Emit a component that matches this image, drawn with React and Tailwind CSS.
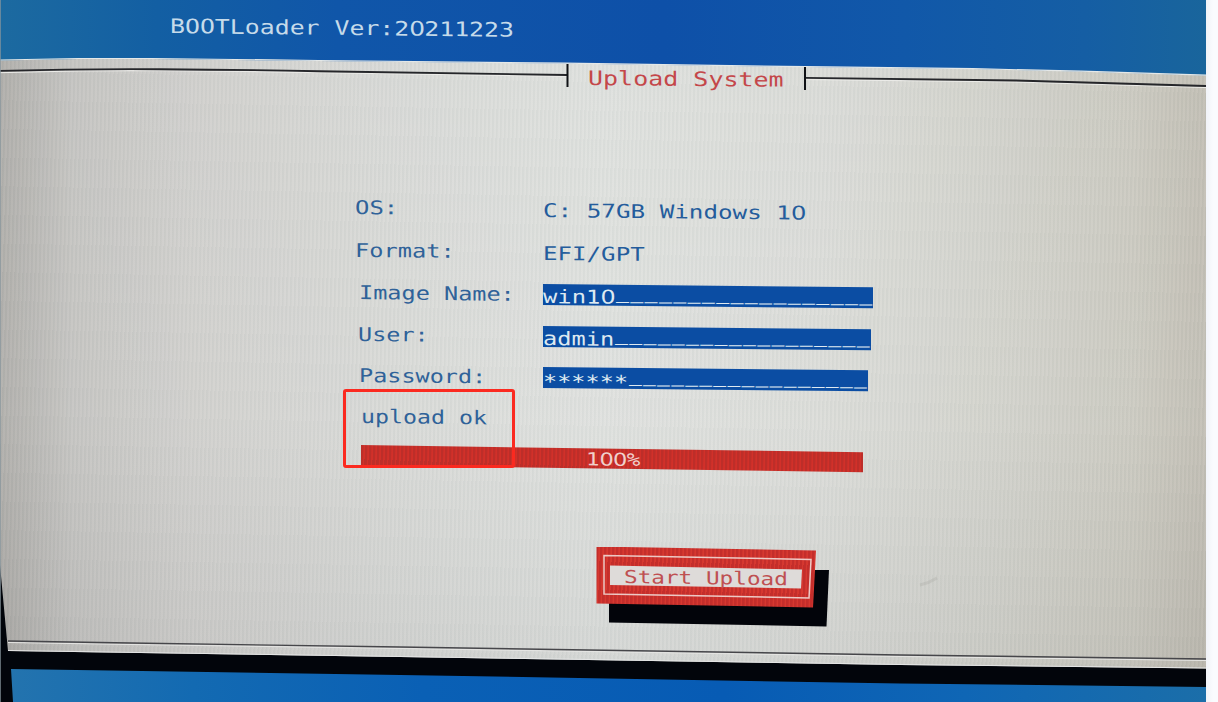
import React from "react";

const layer = "col-start-1 row-start-1";
const glyphs = "block w-max whitespace-pre origin-left font-['DejaVu_Sans_Mono',monospace] leading-[20px]";

// The console typeface has an open zero, so zeros are set in a face without a dot.
function Glyphs({ children, size = "text-[19px]", className = "" }) {
  return (
    <span className={`${glyphs} ${size} ${className}`}>
      {children.split(/(0)/).map((part, i) =>
        part === "0" ? (
          <span key={i} className="font-['DejaVu_Sans',sans-serif] tracking-[-0.034em]">0</span>
        ) : (
          part
        )
      )}
    </span>
  );
}

function Blanks({ count, className = "" }) {
  return (
    <span className={`block w-max origin-left whitespace-pre font-['Liberation_Mono',monospace] text-[20px] leading-[22px] tracking-[1.2px] ${className}`}>
      {"_".repeat(count)}
    </span>
  );
}

function Backdrop() {
  return (
    <div className={`${layer} grid h-[702px] w-[1206px] bg-[#02050b]`}>
      <div className={`${layer} h-[90px] bg-[linear-gradient(90deg,#1c6aa0_0%,#135fa3_13%,#1056a9_28%,#0e50a8_55%,#1158a9_75%,#155ea4_90%,#19659c_100%)]`} />
      <div className={`${layer} grid [clip-path:polygon(0px_60.5px,78px_59px,152px_59px,319px_61px,564px_63.5px,805px_67px,973px_69px,1081px_71.5px,1206px_75.5px,1206px_668.5px,900px_665px,400px_657px,8px_651px,0px_565px)]`}>
        <div className={`${layer} bg-[linear-gradient(90deg,#a9a7a3_0%,#c0bfbc_6%,#cdccc9_16%,#d5d6d3_32%,#dcdedb_50%,#d8d9d5_68%,#cfcfc8_82%,#c7c5bb_94%,#bdb9ae_100%)]`} />
        <div className={`${layer} bg-[linear-gradient(180deg,rgba(255,255,255,0.08)_0%,rgba(255,255,255,0.1)_60%,rgba(110,110,120,0.08)_100%)]`} />
        <div className={`${layer} bg-[repeating-linear-gradient(92deg,rgba(90,120,120,0.04)_0px,rgba(90,120,120,0.04)_1.5px,rgba(255,255,255,0.05)_2.5px,rgba(255,255,255,0.05)_4px)]`} />
      </div>
      <div className={`${layer} bg-[linear-gradient(90deg,#2474ae_0%,#136ab2_16%,#0a60b5_35%,#075bb4_60%,#0f66b5_80%,#1b6ea9_100%)] [clip-path:polygon(11px_669px,400px_675px,900px_683.5px,1206px_687px,1206px_702px,13px_702px)]`} />
      <svg className={`${layer} relative`} width="1206" height="702" viewBox="0 0 1206 702" fill="none">
        <path d="M0 60 78 58.5 152 58.5 319 60.5 564 63.2 805 66.7 973 68.7 1081 71.2 1206 75.2" stroke="#e4e8e8" strokeWidth="1.2" />
        <path d="M0 72.7Q80 70.2 160 70.7T319 72.7L567 76.5M805 79.6 1016 82 1206 87.5" stroke="#ecece9" strokeWidth="1" />
        <path d="M0 70.9Q80 68.7 160 69.2T319 71.2L567 75M805 77.9 1016 80.5 1206 86" stroke="#25262a" strokeWidth="1.9" />
        <path d="M567.5 64V87M805 67V90" stroke="#101216" strokeWidth="2" />
        <path d="M8 642.5 130 644.5 400 648.5 900 656.5 1206 660.5" stroke="#e5e5e3" strokeWidth="1" />
        <path d="M8 641 130 643 400 647 900 655 1206 659" stroke="#46464a" strokeWidth="1.4" />
        <path d="M8 650.5 400 656.5 900 664.5 1206 668" stroke="#e4e5e5" strokeWidth="1" />
        <path d="M0.5 0V702" stroke="#87969d" strokeWidth="1" opacity=".7" />
        <path d="M920 585Q929 583 937 578" stroke="#adada7" strokeWidth="3" opacity=".35" />
      </svg>
    </div>
  );
}

const labelInk = "text-[#2f6299]";

function Row({ label, height, indent, children, labelClass }) {
  return (
    <div className={`grid grid-cols-[188px_auto] ${height}`}>
      <div className={indent}>
        <Glyphs className={`${labelInk} ${labelClass}`}>{label}</Glyphs>
      </div>
      {children}
    </div>
  );
}

function Field({ width, children }) {
  return (
    <div className={`mt-[2px] flex h-[21px] origin-left items-start bg-[#0b4da3] text-[#dde9f1] [transform:skewY(0.58deg)] ${width}`}>
      {children}
    </div>
  );
}

export default function App() {
  return (
    <div className="flex h-[702px] w-[1218px] overflow-hidden bg-[#fafbfe]">
      <div className="grid w-[1206px] shrink-0 overflow-hidden">
        <Backdrop />
        <main className={`${layer} relative isolate flex h-[702px] w-[1206px] flex-col`}>
          <header className="h-[68px] pt-[16px] pl-[170px]">
            <Glyphs size="text-[20px]" className="text-[#c6dbea] [transform:skewY(0.62deg)_scaleX(1.242)]">BOOTLoader Ver:20211223</Glyphs>
          </header>
          <h1 className="h-[128.5px] pl-[588px]">
            <Glyphs size="text-[20px]" className="text-[#c4474a] [transform:skewY(0.5deg)_scaleX(1.25)]">Upload System</Glyphs>
          </h1>
          <section className="pl-[355px]">
            <Row label="OS:" height="h-[43.5px]" indent="" labelClass="[transform:skewY(0.5deg)_scaleX(1.258)]">
              <Glyphs className="mt-[3px] text-[#245c9c] [transform:skewY(0.58deg)_scaleX(1.275)]">C: 57GB Windows 10</Glyphs>
            </Row>
            <Row label="Format:" height="h-[42px]" indent="" labelClass="[transform:skewY(0.5deg)_scaleX(1.245)]">
              <Glyphs className="mt-[2.5px] text-[#245c9c] [transform:skewY(0.5deg)_scaleX(1.27)]">EFI/GPT</Glyphs>
            </Row>
            <Row label="Image Name:" height="h-[41.5px]" indent="pl-[3.5px]" labelClass="[transform:skewY(0.7deg)_scaleX(1.238)]">
              <Field width="w-[330px]">
                <div className="w-[73px] pt-[2px]">
                  <Glyphs className="[transform:scaleX(1.254)]">win10</Glyphs>
                </div>
                <Blanks count={18} className="[transform:scaleX(1.084)]" />
              </Field>
            </Row>
            <Row label="User:" height="h-[41.5px]" indent="pl-[3px]" labelClass="[transform:skewY(0.5deg)_scaleX(1.235)]">
              <Field width="w-[328px]">
                <div className="w-[72px] pt-[2px]">
                  <Glyphs className="[transform:scaleX(1.246)]">admin</Glyphs>
                </div>
                <Blanks count={18} className="[transform:scaleX(1.077)]" />
              </Field>
            </Row>
            <Row label="Password:" height="h-[41px]" indent="pl-[3.5px]" labelClass="[transform:skewY(0.6deg)_scaleX(1.235)]">
              <Field width="w-[325px]">
                <div className="w-[86px] pt-[4px]">
                  <Glyphs className="[transform:scaleX(1.24)]">******</Glyphs>
                </div>
                <Blanks count={17} className="[transform:scaleX(1.065)]" />
              </Field>
            </Row>
            <div className="h-[38.5px] pl-[5.5px]">
              <Glyphs className={`${labelInk} [transform:skewY(0.6deg)_scaleX(1.223)]`}>upload ok</Glyphs>
            </div>
            <div className="ml-[6px] flex h-[20px] w-[502px] origin-left bg-[repeating-linear-gradient(92deg,#bd2e29_0px,#bd2e29_2px,#d23029_3px,#d23029_4px)] pt-px pl-[225px] [transform:skewY(0.83deg)]">
              <Glyphs size="text-[18px]" className="text-[#f0d0cc] [transform:scaleX(1.25)]">100%</Glyphs>
            </div>
          </section>
          <div className="mt-[82px] ml-[596px] grid h-[82px] w-[234px]">
            <div className={`${layer} mt-[23px] ml-[13px] bg-[#02040a] [clip-path:polygon(0_0,220px_0px,217.5px_57px,0_53px)]`} />
            <button type="button" className={`${layer} relative grid h-[62px] w-[220px] text-left`}>
              <span className={`${layer} block h-[62px] bg-[repeating-linear-gradient(92deg,#c42e2b_0px,#c42e2b_2px,#d63830_3px,#d63830_4px)] [clip-path:polygon(0.5px_0,220px_4px,217px_61px,0.5px_57px)]`} />
              <svg className={`${layer} relative`} width="220" height="62" viewBox="0 0 220 62" fill="none">
                <path d="M8 8.5 215 12.5 213 51 8 47Z" stroke="#edc9c5" strokeWidth="1.5" />
              </svg>
              <span className={`${layer} block bg-[#dedbd9] [clip-path:polygon(14px_19px,206px_23px,205px_42px,14px_38.5px)]`} />
              <span className={`${layer} relative block pt-[20.5px] pl-[27.5px]`}>
                <Glyphs size="text-[18px]" className="text-[#bf5052] [transform:skewY(0.8deg)_scaleX(1.26)]">Start Upload</Glyphs>
              </span>
            </button>
          </div>
          <div className="absolute top-[389px] left-[342.5px] h-[78.5px] w-[172.5px] rounded-[3px] border-3 border-[#fb2a20]" />
        </main>
      </div>
      <div className="w-3 bg-[linear-gradient(90deg,#f1f3f8,#fafbfe_60%)]" />
    </div>
  );
}
